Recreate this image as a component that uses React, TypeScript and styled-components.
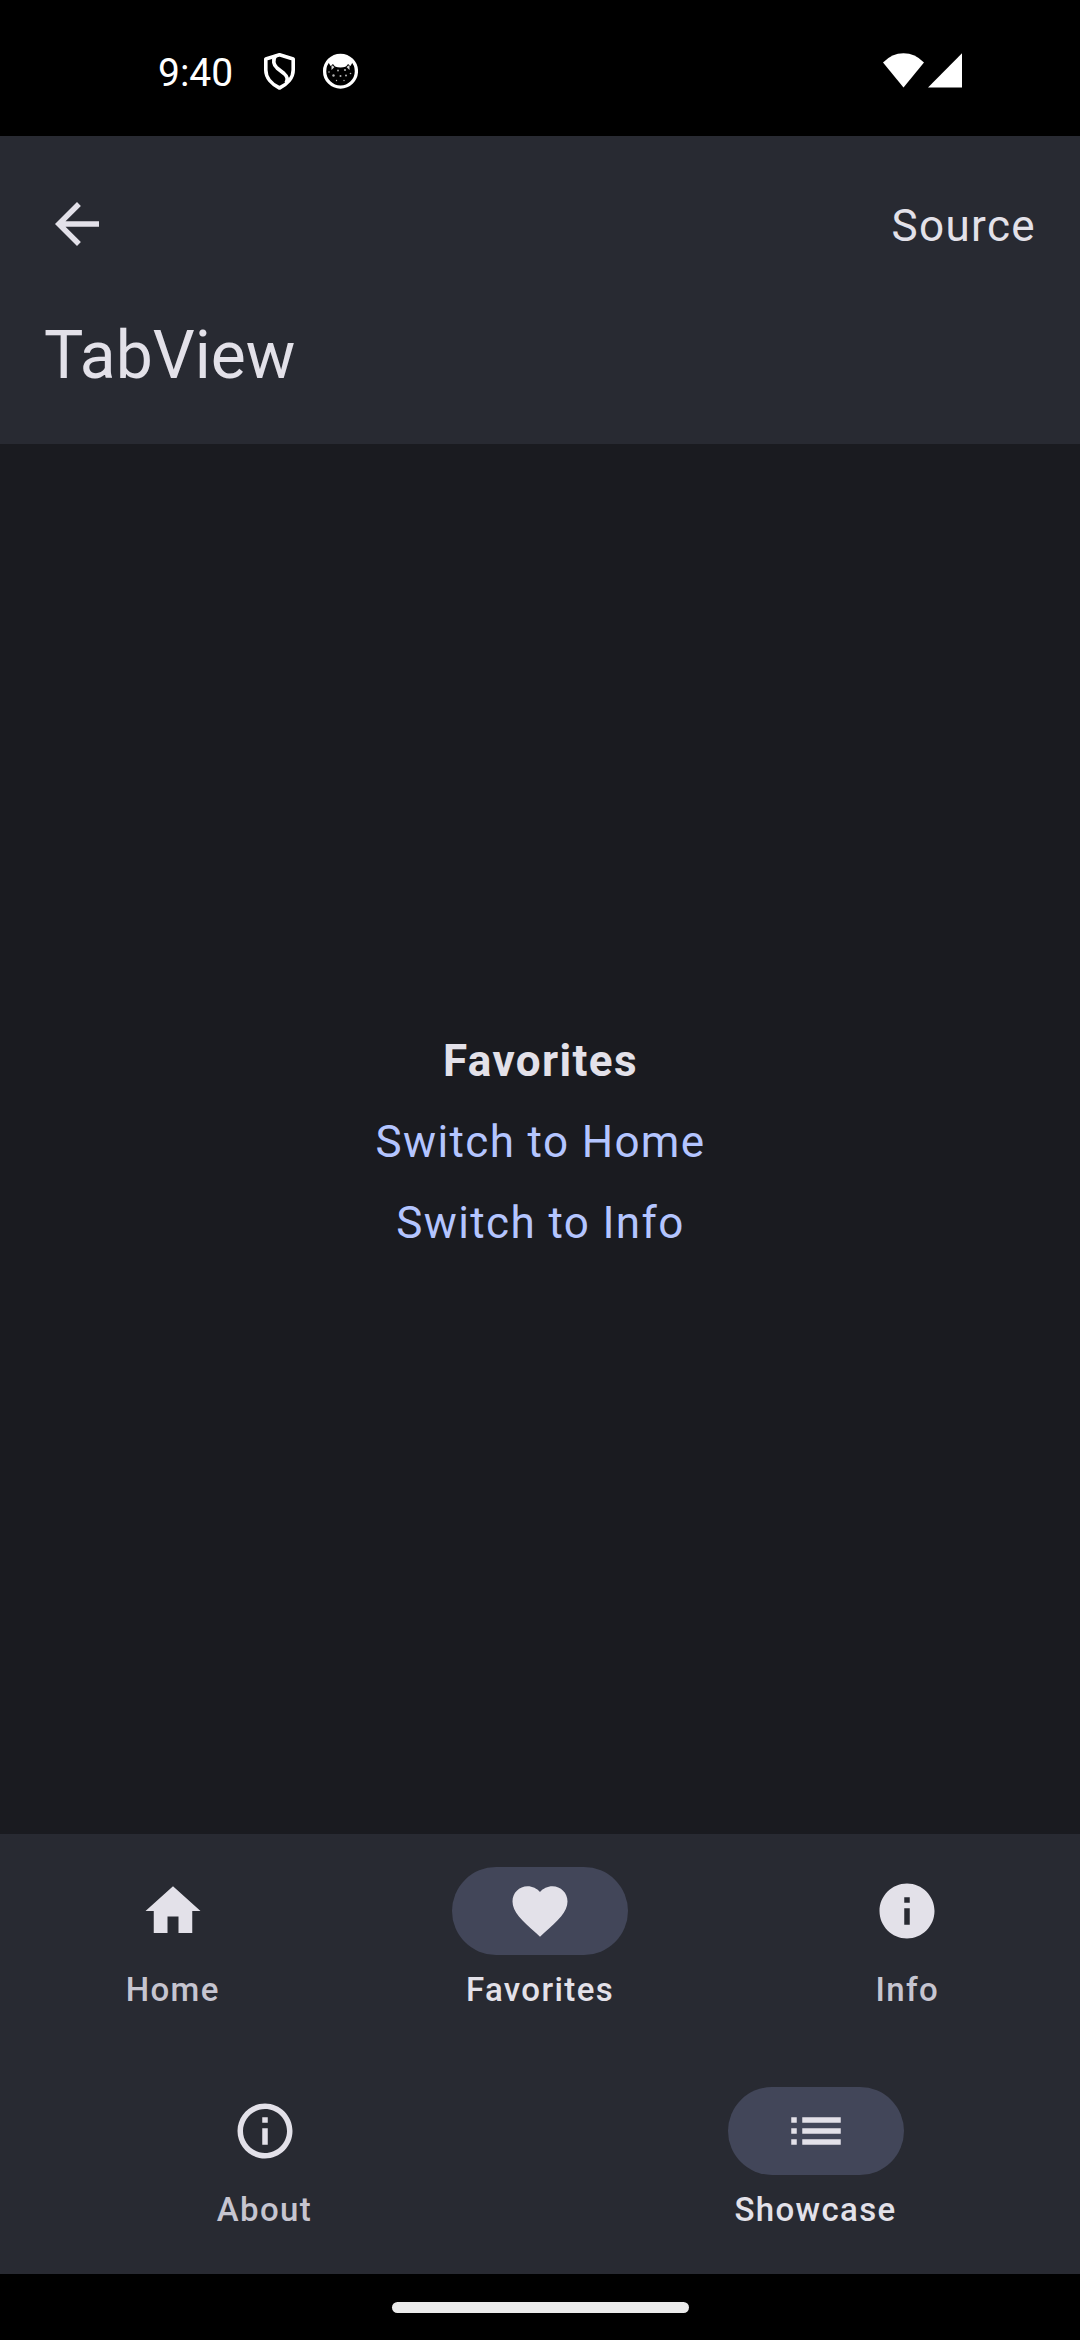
import React from "react";
import styled, { createGlobalStyle } from "styled-components";

const GlobalStyle = createGlobalStyle`
  * { box-sizing: border-box; }
  body { margin: 0; background: #000; }
`;

const Screen = styled.div`
  display: flex;
  flex-direction: column;
  width: 1080px;
  height: 2340px;
  background: #1a1b20;
  color: #e3e1e9;
  font-family: Roboto, "Liberation Sans", sans-serif;
`;

const StatusBar = styled.div`
  display: flex;
  align-items: center;
  justify-content: space-between;
  height: 136px;
  padding: 6px 117px 0 158px;
  background: #000;
  color: #fff;
`;

const StatusGroup = styled.div<{ $gap: number }>`
  display: flex;
  align-items: center;
  gap: ${(p) => p.$gap}px;
`;

const Clock = styled.span`
  width: 105px;
  padding-top: 3px;
  font-family: Roboto, sans-serif;
  font-size: 39px;
  line-height: 46px;
`;

const Header = styled.header`
  height: 308px;
  background: #282a32;
`;

const ActionRow = styled.div`
  display: flex;
  align-items: center;
  justify-content: space-between;
  height: 176px;
  padding: 0 44px;
`;

const PlainButton = styled.button`
  display: flex;
  padding: 0;
  border: 0;
  background: none;
  color: inherit;
  font: inherit;
`;

const SourceButton = styled(PlainButton)`
  padding-top: 4px;
  font-size: 44px;
  line-height: 66px;
  letter-spacing: 1.375px;
`;

const Title = styled.h1`
  margin: 0;
  padding: 0 44px;
  font-size: 66px;
  font-weight: 400;
  line-height: 88px;
`;

const Content = styled.main`
  flex: 1;
  display: flex;
  flex-direction: column;
  align-items: center;
  justify-content: center;
  gap: 15px;
  padding: 6px 0 0 1px;
  font-size: 44px;
  line-height: 66px;
  letter-spacing: 1.375px;
`;

const Heading = styled.strong`
  font-weight: 700;
`;

const TextLink = styled(PlainButton)`
  color: #b4c5ff;
  letter-spacing: inherit;
`;

const NavBar = styled.nav`
  display: flex;
  gap: 22px;
  height: 220px;
  background: #282a32;
`;

const NavItem = styled.button`
  flex: 1;
  display: flex;
  flex-direction: column;
  align-items: center;
  gap: 13px;
  padding: 33px 0 0;
  border: 0;
  background: none;
`;

const Pill = styled.span<{ $active: boolean }>`
  display: flex;
  align-items: center;
  justify-content: center;
  width: 176px;
  height: 88px;
  border-radius: 44px;
  background: ${(p) => (p.$active ? "#424659" : "transparent")};
  color: #e3e1e9;
`;

const Label = styled.span<{ $active: boolean }>`
  font-family: Roboto, "Liberation Sans", sans-serif;
  font-size: 33px;
  font-weight: 500;
  line-height: 44px;
  letter-spacing: 1.375px;
  color: ${(p) => (p.$active ? "#e3e1e9" : "#c6c5d0")};
`;

const GestureBar = styled.div`
  display: flex;
  align-items: center;
  justify-content: center;
  height: 66px;
  background: #000;
`;

const Handle = styled.div`
  width: 297px;
  height: 11px;
  border-radius: 6px;
  background: #ebebeb;
`;

const Glyph = ({ d }: { d: string }) => (
  <svg width="66" height="66" viewBox="0 0 24 24" fill="currentColor">
    <path d={d} />
  </svg>
);

const icons = {
  back: "M20 11H7.83l5.59-5.59L12 4l-8 8 8 8 1.41-1.41L7.83 13H20v-2z",
  home: "M10 20v-6h4v6h5v-8h3L12 3 2 12h3v8z",
  heart:
    "M12 21.35l-1.45-1.32C5.4 15.36 2 12.28 2 8.5 2 5.42 4.42 3 7.5 3c1.74 0 3.41.81 4.5 2.09C13.09 3.81 14.76 3 16.5 3 19.58 3 22 5.42 22 8.5c0 3.78-3.4 6.86-8.55 11.54L12 21.35z",
  info: "M12 2C6.48 2 2 6.48 2 12s4.48 10 10 10 10-4.48 10-10S17.52 2 12 2zm1 15h-2v-6h2v6zm0-8h-2V7h2v2z",
  infoOutline:
    "M11 7h2v2h-2zm0 4h2v6h-2zm1-9C6.48 2 2 6.48 2 12s4.48 10 10 10 10-4.48 10-10S17.52 2 12 2zm0 18c-4.41 0-8-3.59-8-8s3.59-8 8-8 8 3.59 8 8-3.59 8-8 8z",
  list: "M3 13h2v-2H3v2zm0 4h2v-2H3v2zm0-8h2V7H3v2zm4 4h14v-2H7v2zm0 4h14v-2H7v2zM7 7v2h14V7H7z",
};

const ShieldIcon = () => (
  <svg width="33" height="38" viewBox="0 0 33 38" fill="none" stroke="#fff">
    <path d="M16.500 2.800 30.200 7V18C30.200 26 24 32.500 16.500 36 9 32.500 2.800 26 2.800 18V7Z" strokeWidth="3.600" strokeLinejoin="round" />
    <path d="M12.500 4C9.500 8 10.500 13 14 16L21 21.500C25 25 25 28 23 31" strokeWidth="3.600" />
  </svg>
);

const CatIcon = () => (
  <svg width="36" height="38" viewBox="0 -1 36 38" fill="#fff">
    <circle cx="18.500" cy="18.200" r="15.900" fill="none" stroke="#fff" strokeWidth="3.300" />
    <path d="M6 8.500Q11 2 18.500 2T31 8.500L28.500 13 26 11Q24.500 14.500 18.500 14.500T11 11L8.500 13Z" />
    <path d="M9.500 12 9.500 17 12.500 14ZM27.500 12 27.500 17 24.500 14Z" opacity=".85" />
    <g opacity=".7">
      <circle cx="16" cy="17.500" r=".9" />
      <circle cx="23" cy="17" r="1.100" />
      <circle cx="11.500" cy="22.500" r="1.200" />
      <circle cx="18.500" cy="23" r="1" />
      <circle cx="24" cy="22.500" r="1" />
      <circle cx="28.500" cy="20.500" r=".8" />
      <circle cx="7" cy="19" r=".8" />
      <circle cx="14.500" cy="27.500" r=".7" />
      <circle cx="22" cy="27.500" r=".7" />
    </g>
  </svg>
);

type Tab = { label: string; icon: string; active?: boolean };

const viewTabs: Tab[] = [
  { label: "Home", icon: icons.home },
  { label: "Favorites", icon: icons.heart, active: true },
  { label: "Info", icon: icons.info },
];

const appTabs: Tab[] = [
  { label: "About", icon: icons.infoOutline },
  { label: "Showcase", icon: icons.list, active: true },
];

const Tabs = ({ tabs }: { tabs: Tab[] }) => (
  <NavBar>
    {tabs.map((tab) => (
      <NavItem key={tab.label}>
        <Pill $active={!!tab.active}>
          <Glyph d={tab.icon} />
        </Pill>
        <Label $active={!!tab.active}>{tab.label}</Label>
      </NavItem>
    ))}
  </NavBar>
);

export default function App() {
  return (
    <Screen>
      <GlobalStyle />
      <StatusBar>
        <StatusGroup $gap={0}>
          <Clock>9:40</Clock>
          <StatusGroup $gap={26}>
            <ShieldIcon />
            <CatIcon />
          </StatusGroup>
        </StatusGroup>
        <StatusGroup $gap={4}>
          <svg width="41" height="36" viewBox="0 0 41 36" fill="#fff">
            <path d="M0 9.500Q9 .3 20.500 .3T41 9.500L20.500 34.500Z" />
          </svg>
          <svg width="35" height="36" viewBox="0 0 35 36" fill="#fff">
            <path d="M34 .3V34.500H0Z" />
          </svg>
        </StatusGroup>
      </StatusBar>
      <Header>
        <ActionRow>
          <PlainButton aria-label="Back">
            <Glyph d={icons.back} />
          </PlainButton>
          <SourceButton>Source</SourceButton>
        </ActionRow>
        <Title>TabView</Title>
      </Header>
      <Content>
        <Heading>Favorites</Heading>
        <TextLink>Switch to Home</TextLink>
        <TextLink>Switch to Info</TextLink>
      </Content>
      <Tabs tabs={viewTabs} />
      <Tabs tabs={appTabs} />
      <GestureBar>
        <Handle />
      </GestureBar>
    </Screen>
  );
}
